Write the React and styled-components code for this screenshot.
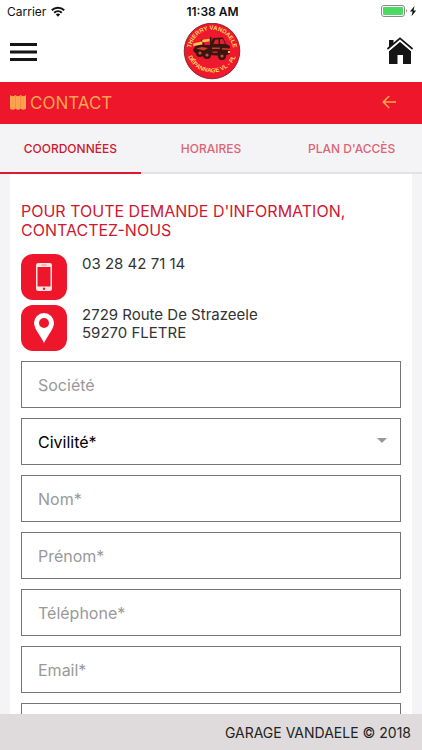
import React from "react";
import styled, { createGlobalStyle } from "styled-components";

const RED = "#ee162b";
const DARK_RED = "#cf1830";
const ORANGE = "#ffa552";

const GlobalStyle = createGlobalStyle`
  *, *::before, *::after { box-sizing: border-box; }
  body {
    margin: 0;
    background: #f4f4f6;
    color: #333;
    font-family: Inter, Roboto, "Liberation Sans", sans-serif;
    font-size: 16px;
  }
  button, input, select { font: inherit; }
`;

const Screen = styled.div`
  display: flex;
  flex-direction: column;
  height: 100vh;
`;

const StatusBar = styled.div`
  flex: none;
  display: grid;
  grid-template-columns: 1fr auto 1fr;
  align-items: center;
  height: 22px;
  padding: 0 4px 0 7px;
  background: #fff;
  color: #111;
  font-size: 12px;
`;

const StatusSide = styled.div`
  display: flex;
  align-items: center;
  justify-content: ${(p) => (p.$end ? "flex-end" : "flex-start")};
  gap: 5px;
`;

const Clock = styled.time`
  font-weight: 600;
`;

const Header = styled.header`
  flex: none;
  display: flex;
  align-items: center;
  justify-content: space-between;
  height: 60px;
  padding: 0 8px 0 10px;
  background: #fff;
`;

const IconButton = styled.button`
  display: flex;
  padding: 0;
  border: 0;
  background: none;
  color: ${(p) => p.$color || "#151515"};
  cursor: pointer;
`;

const TitleBar = styled.div`
  flex: none;
  display: flex;
  align-items: center;
  gap: 4px;
  height: 42px;
  padding: 0 26px 0 10px;
  background: ${RED};
  color: ${ORANGE};
`;

const Title = styled.h1`
  flex: 1;
  margin: 0;
  font-size: 17px;
  font-weight: 400;
  line-height: 24px;
`;

const Tabs = styled.div`
  flex: none;
  display: grid;
  grid-template-columns: repeat(3, 1fr);
`;

const Tab = styled.button`
  height: 50px;
  padding: 0;
  border: 0;
  border-bottom: 2px solid ${(p) => (p.$active ? "#dd1a30" : "#e2e2e4")};
  background: #f4f4f6;
  color: ${(p) => (p.$active ? DARK_RED : "#dc6474")};
  font-size: 12px;
  font-weight: 500;
  cursor: pointer;
`;

const Content = styled.main`
  flex: 1;
  min-height: 0;
  overflow-y: auto;
  scrollbar-width: none;
  padding: 0 10px;
`;

const Panel = styled.section`
  padding: 28px 11px 20px;
  background: #fff;
`;

const Heading = styled.h2`
  margin: 0 0 14px;
  color: ${DARK_RED};
  font-size: 16px;
  font-weight: 400;
  line-height: 19px;
`;

const ContactRow = styled.div`
  display: flex;
  gap: 15px;
  margin-bottom: 5px;
`;

const ContactBadge = styled.div`
  flex: none;
  display: flex;
  align-items: center;
  justify-content: center;
  width: 46px;
  height: 46px;
  border-radius: 12px;
  background: ${RED};
`;

const ContactText = styled.div`
  padding-top: 1px;
  font-size: 15px;
  line-height: 18px;
`;

const Form = styled.form`
  display: grid;
  gap: 10px;
  margin-top: 10px;
`;

const Field = styled.input`
  width: 100%;
  height: 47px;
  padding: 0 16px;
  border: 1px solid #757575;
  border-radius: 0;
  background: #fff;
  color: #000;
  &::placeholder { color: #999; opacity: 1; }
`;

const SelectBox = styled.div`
  position: relative;
  display: flex;
`;

const Select = styled(Field).attrs({ as: "select" })`
  appearance: none;
`;

const Caret = styled.svg`
  position: absolute;
  top: 20px;
  right: 14px;
  pointer-events: none;
`;

const Footer = styled.footer`
  flex: none;
  height: 36px;
  padding: 0 11px;
  background: #dfdbdc;
  color: #222;
  font-size: 14px;
  line-height: 38px;
  text-align: right;
`;

const Wifi = () => (
  <svg width="14" height="11" viewBox="0 0 14 11" fill="none" stroke="#111" strokeWidth="2" aria-hidden="true">
    <path d="M.8 4.3a9 9 0 0 1 12.4 0M3.2 6.8a5.5 5.5 0 0 1 7.6 0" />
    <path d="M4.8 8.5a3.3 3.3 0 0 1 4.4 0L7 10.8z" fill="#111" stroke="none" />
  </svg>
);

const Battery = () => (
  <svg width="37" height="12" viewBox="0 0 37 12" aria-hidden="true">
    <rect x=".5" y=".5" width="23" height="11" rx="2.5" fill="#fff" stroke="#8b8b8b" />
    <rect x="2" y="2" width="20" height="8" rx="1" fill="#4cd964" />
    <path d="M25 4.3c1.4.5 1.4 2.7 0 3.2z" fill="#8b8b8b" />
    <path d="M33.5 1 29 6.6h2.6L30.5 11.3 35.2 5.5h-2.7z" fill="#111" />
  </svg>
);

const MenuIcon = () => (
  <svg width="28" height="20" viewBox="0 0 28 20" fill="currentColor" aria-hidden="true">
    <path d="M0 1h27v3H0zM0 8.5h27v3H0zM0 16h27v3H0z" />
  </svg>
);

const HomeIcon = () => (
  <svg width="28" height="30" viewBox="0 0 28 30" aria-hidden="true">
    <path d="M3 10V3h4.5v7" fill="currentColor" />
    <path d="M3 14 14 4.5l11 9.5V27h-8v-9h-5.5v9H3z" fill="currentColor" />
    <path d="M2.2 12.8 14 2.8l11.8 10" fill="none" stroke="#fff" strokeWidth="3" />
    <path d="M1.4 12 14 1.4 26.6 12" fill="none" stroke="currentColor" strokeWidth="1.7" />
  </svg>
);

const Logo = () => (
  <svg width="58" height="58" viewBox="0 0 58 58" role="img" aria-label="Thierry Vandaele Dépannage VL - PL">
    <defs>
      <path id="arc-top" d="M10.3 38A21.2 21.2 0 1 1 47.7 38" />
      <path id="arc-bottom" d="M3.3 26A25.8 25.8 0 0 0 54.7 26" />
    </defs>
    <circle cx="29" cy="28" r="27.8" fill="#f0182c" stroke="#6b1a1e" strokeWidth=".8" />
    <g fill="#ffd860" fontFamily="Liberation Sans, sans-serif" fontSize="6" fontWeight="700" textAnchor="middle">
      <text><textPath href="#arc-top" startOffset="50%">THIERRY VANDAELE</textPath></text>
      <text><textPath href="#arc-bottom" startOffset="50%">DÉPANNAGE VL - PL</textPath></text>
    </g>
    <g fill="#3a1511">
      <path d="M13 22h14l3-7 10-.5 3 6.5 4 2v8l-7 2-13-1-15-2-2-3z" />
      <path d="m18 17 2-1 2 7h-2zM27 14h1.5v9H27z" />
      <circle cx="17" cy="30" r="4" /><circle cx="24" cy="32" r="4" /><circle cx="39" cy="33" r="4" />
    </g>
    <path d="m30.5 21 1.800-4.500h3.200V21zM37 16.300l3-.2 2 4.900h-5z" fill="#d52630" />
    <path d="m10 20.500 9-2 .5 2.800-9 2zM19 16.800l7.500-1v2.500l-7 1.200z" fill="#ffc44b" />
    <path d="m13 25.500 6-1.500 6 1-4 2.500zM29 24.500h8V26h-8zM39 25l8 .5V27l-8-.5zM29.500 28.500h5v1.200h-5z" fill="#d23a2d" />
    <g fill="#c85436"><circle cx="17" cy="30" r="1.600" /><circle cx="24" cy="32" r="1.600" /><circle cx="39" cy="33" r="1.600" /></g>
    <circle cx="46" cy="29" r="1.200" fill="#ffc44b" />
  </svg>
);

const MapIcon = () => (
  <svg width="16" height="16" viewBox="0 0 16 16" aria-hidden="true">
    <path d="M0 0c2 1.700 3 1.700 5.300 0 2 1.700 3.300 1.700 5.400 0 2 1.700 3.300 1.700 5.300 0v13.500c-2 1.700-3.300 1.700-5.300 0-2 1.700-3.400 1.700-5.400 0-2 1.700-3.300 1.700-5.300 0z" fill="currentColor" />
    <path d="M5.300 1v12M10.700 1v12" stroke="#ee752f" strokeWidth=".6" />
    <path d="M2.700 3v10M8 3v10M13.300 3v10" stroke="#e99848" strokeWidth=".6" />
  </svg>
);

const BackIcon = () => (
  <svg width="14" height="14" viewBox="0 0 14 14" fill="none" stroke="currentColor" strokeWidth="1.500" aria-hidden="true">
    <path d="M14 6H1.300M7.200 0l-6 6 6 6" />
  </svg>
);

const PhoneIcon = () => (
  <svg width="16" height="28" viewBox="0 0 16 28" aria-hidden="true">
    <rect width="16" height="28" rx="2.200" fill="#ffe5df" />
    <path d="M1.500 4h13v19.500h-13z" fill={RED} />
    <path d="M5.500 2h5" stroke="#e68a85" />
    <circle cx="8" cy="25.700" r="1.200" fill={RED} />
  </svg>
);

const PinIcon = () => (
  <svg width="20" height="30" viewBox="0 0 20 30" aria-hidden="true">
    <path fillRule="evenodd" d="M10 0a10 10 0 0 0-10 10c0 5.500 6 12 10 20 4-8 10-14.500 10-20A10 10 0 0 0 10 0zm0 5a5 5 0 1 1 0 10 5 5 0 0 1 0-10z" fill="#fff" />
  </svg>
);

export default function App() {
  return (
    <>
      <GlobalStyle />
      <Screen>
        <StatusBar>
          <StatusSide>Carrier <Wifi /></StatusSide>
          <Clock>11:38 AM</Clock>
          <StatusSide $end><Battery /></StatusSide>
        </StatusBar>
        <Header>
          <IconButton aria-label="Menu"><MenuIcon /></IconButton>
          <Logo />
          <IconButton aria-label="Accueil"><HomeIcon /></IconButton>
        </Header>
        <TitleBar>
          <MapIcon />
          <Title>CONTACT</Title>
          <IconButton $color={ORANGE} aria-label="Retour"><BackIcon /></IconButton>
        </TitleBar>
        <Tabs role="tablist">
          <Tab role="tab" aria-selected="true" $active>COORDONNÉES</Tab>
          <Tab role="tab" aria-selected="false">HORAIRES</Tab>
          <Tab role="tab" aria-selected="false">PLAN D'ACCÈS</Tab>
        </Tabs>
        <Content>
          <Panel>
            <Heading>POUR TOUTE DEMANDE D'INFORMATION, CONTACTEZ-NOUS</Heading>
            <ContactRow>
              <ContactBadge><PhoneIcon /></ContactBadge>
              <ContactText>03 28 42 71 14</ContactText>
            </ContactRow>
            <ContactRow>
              <ContactBadge><PinIcon /></ContactBadge>
              <ContactText>2729 Route De Strazeele<br />59270 FLETRE</ContactText>
            </ContactRow>
            <Form>
              <Field aria-label="Société" placeholder="Société" />
              <SelectBox>
                <Select aria-label="Civilité" defaultValue="">
                  <option value="">Civilité*</option>
                  <option>Madame</option>
                  <option>Monsieur</option>
                </Select>
                <Caret width="10" height="5" viewBox="0 0 10 5" aria-hidden="true">
                  <path d="M0 0h10L5 5z" fill="#999" />
                </Caret>
              </SelectBox>
              <Field aria-label="Nom" placeholder="Nom*" required />
              <Field aria-label="Prénom" placeholder="Prénom*" required />
              <Field aria-label="Téléphone" type="tel" placeholder="Téléphone*" required />
              <Field aria-label="Email" type="email" placeholder="Email*" required />
              <Field aria-label="Adresse" />
            </Form>
          </Panel>
        </Content>
        <Footer>GARAGE VANDAELE © 2018</Footer>
      </Screen>
    </>
  );
}
